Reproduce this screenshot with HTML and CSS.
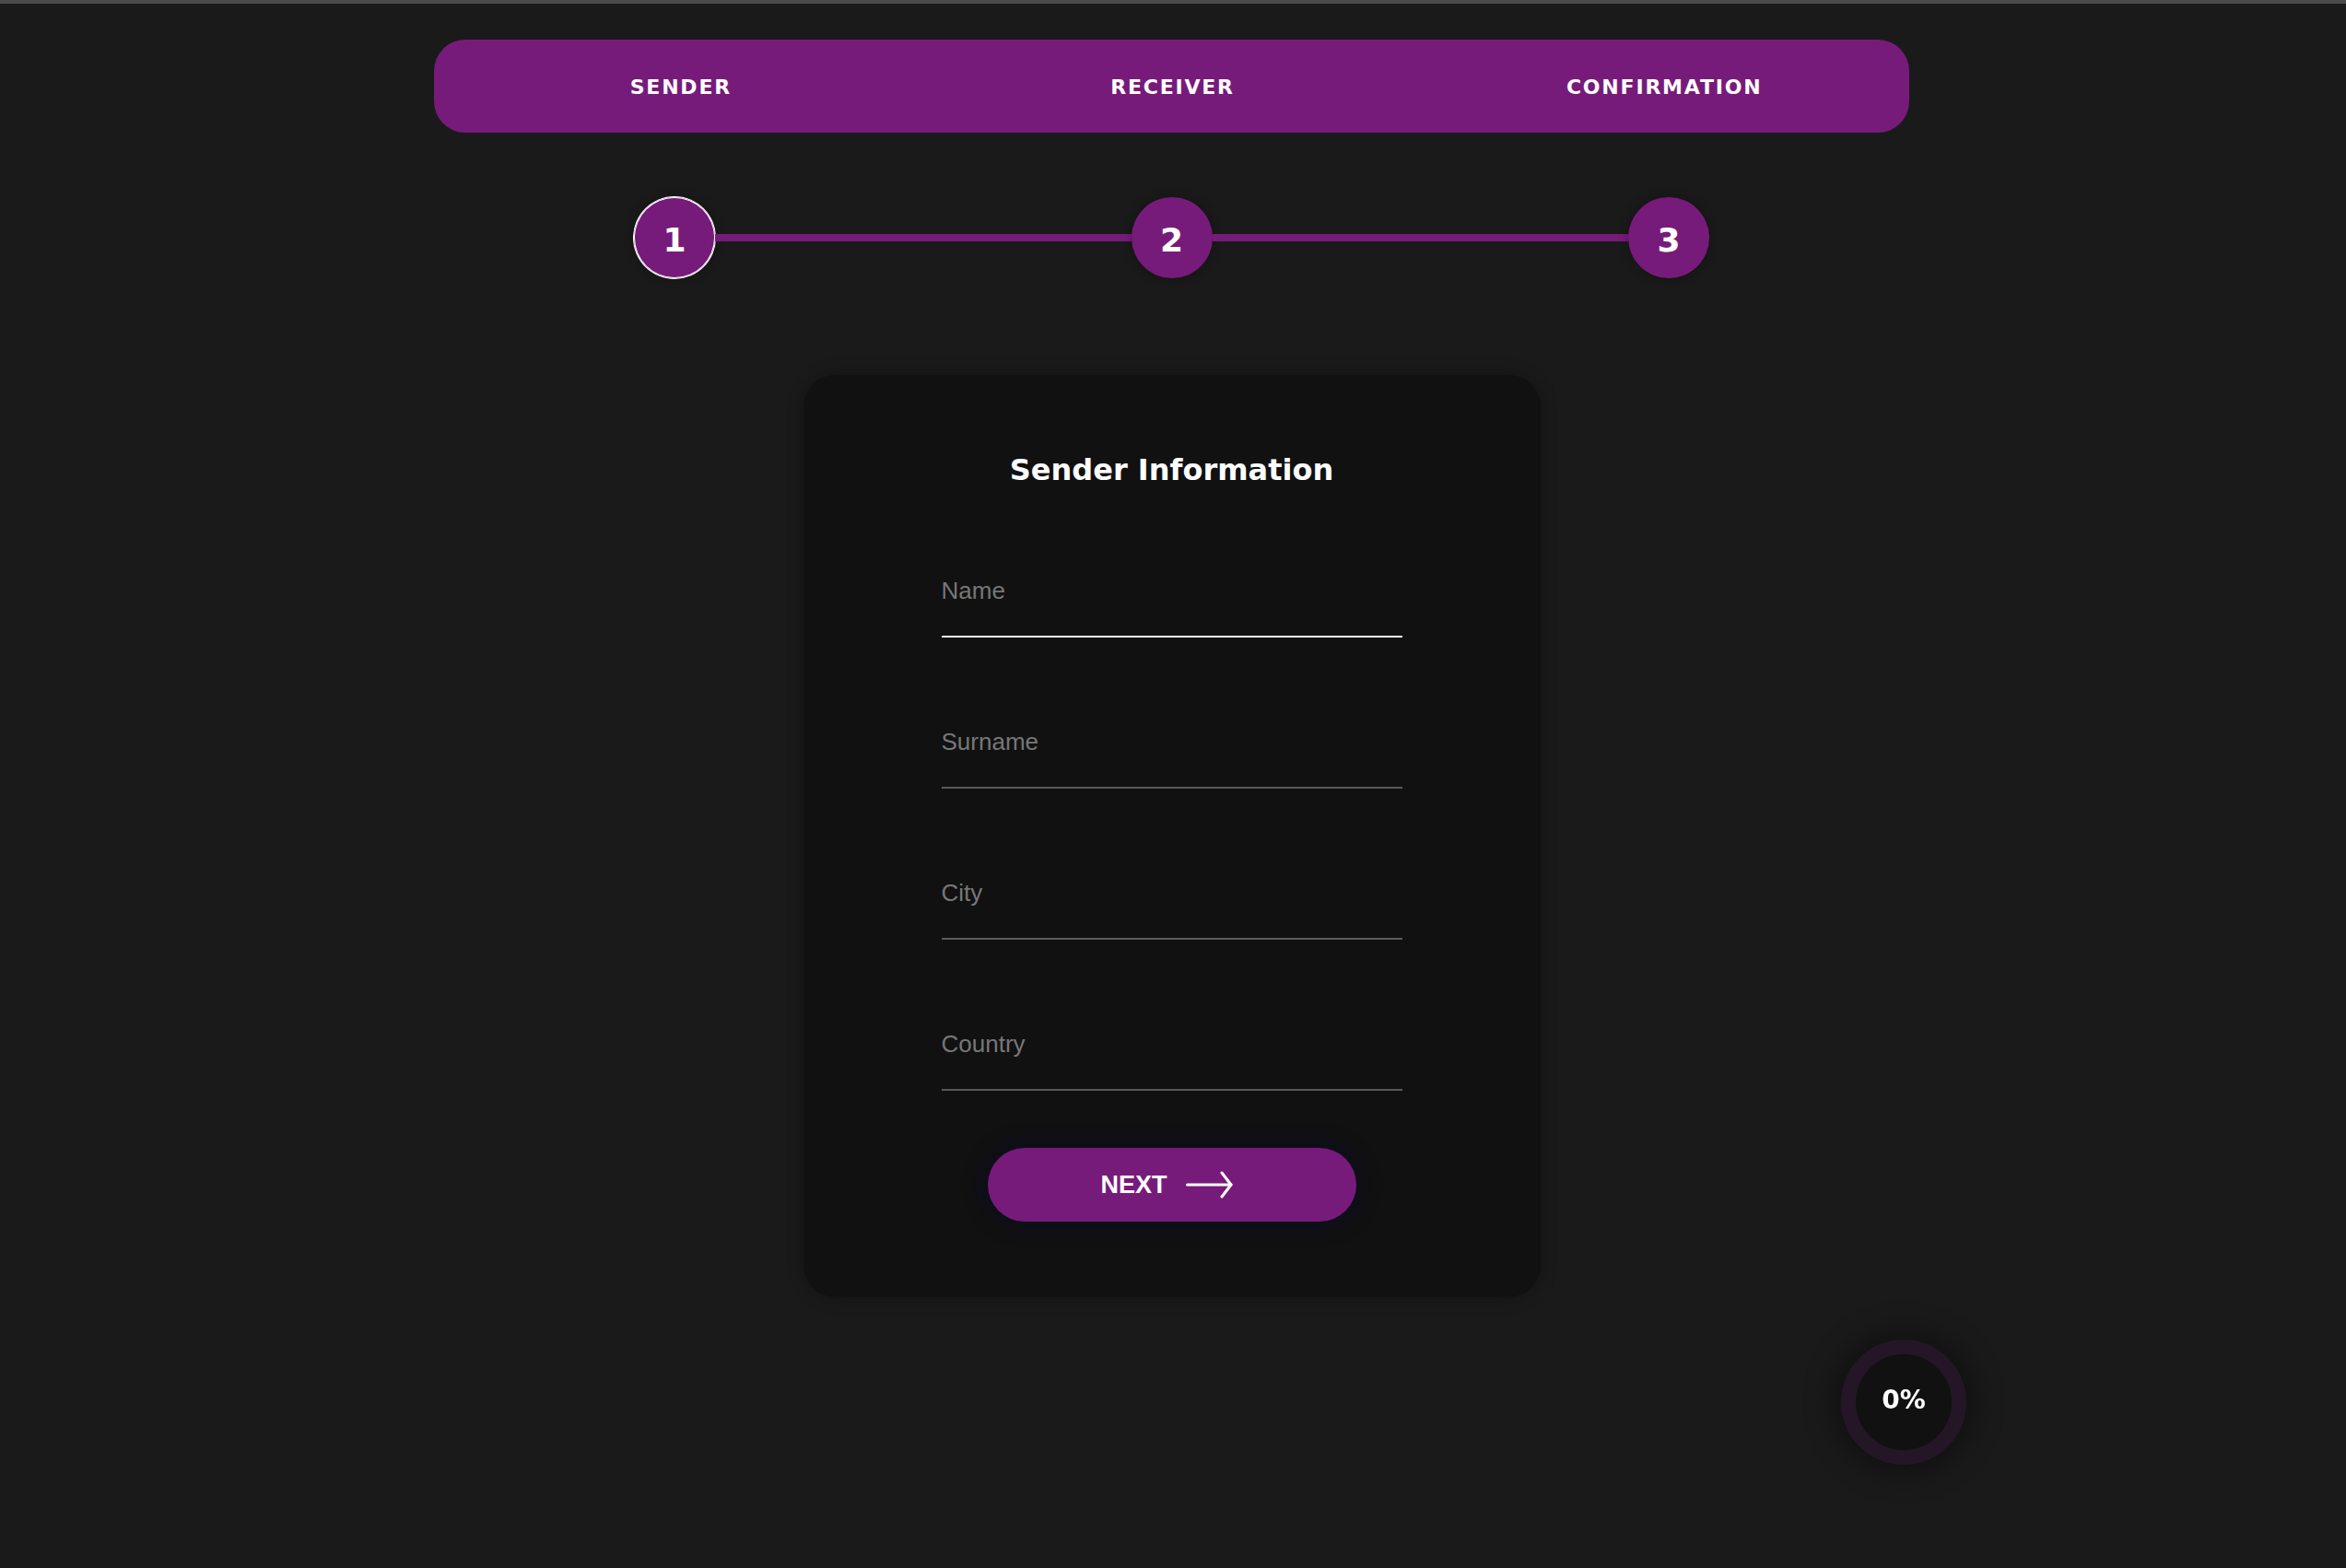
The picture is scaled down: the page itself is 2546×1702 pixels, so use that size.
FILE: index.html
```html
<!DOCTYPE html>
<html lang="en">
<head>
<meta charset="utf-8">
<title>Transfer - Sender</title>
<link rel="stylesheet" href="styles.css">
</head>
<body>
<!-- step tabs -->
<div class="tabs">
  <div class="tab">Sender</div>
  <div class="tab">Receiver</div>
  <div class="tab">Confirmation</div>
</div>

<!-- progress steps -->
<div class="steps">
  <div class="step active">1</div>
  <div class="step-line"></div>
  <div class="step">2</div>
  <div class="step-line"></div>
  <div class="step">3</div>
</div>

<!-- form card -->
<form class="card">
  <h2 class="card-title">Sender Information</h2>
  <div class="fields">
    <input class="field focused" type="text" placeholder="Name">
    <input class="field" type="text" placeholder="Surname">
    <input class="field" type="text" placeholder="City">
    <input class="field" type="text" placeholder="Country">
  </div>
  <button class="next-btn" type="button">
    <span>NEXT</span>
    <svg width="52" height="30" viewBox="0 0 52 30" fill="none" stroke="#fff" stroke-width="3" stroke-linecap="round" stroke-linejoin="round">
      <line x1="1.5" y1="15" x2="49" y2="15"/>
      <polyline points="39,2 49,15 39,28"/>
    </svg>
  </button>
</form>

<div class="progress"><span>0%</span></div>
</body>
</html>
```

FILE: styles.css
```css
body { margin:0; padding-right:3px; background:#1a1a1a; border-top:4px solid #4b4b4d; font-family:"DejaVu Sans", Verdana, sans-serif; color:#fff; min-height:1698px; }

.tabs { width:1601px; height:101px; margin:39px auto 0; background:#771b7b; border-radius:34px; display:flex; }
.tab { flex:1; display:flex; align-items:center; justify-content:center; font-size:22px; font-weight:bold; letter-spacing:1.8px; text-transform:uppercase; padding:2px 0 0 2px; }

.steps { width:1167px; margin:70px auto 0; display:flex; align-items:center; }
.step { width:88px; height:88px; border-radius:50%; background:#771b7b; display:flex; align-items:center; justify-content:center; font-size:36px; font-weight:bold; padding-top:4px; box-sizing:border-box; box-shadow:0 0 12px rgba(0,0,0,.3); flex:none; }
.step.active { box-shadow:0 0 0 1px #fff, inset 0 0 0 1px #fff, 0 0 12px rgba(0,0,0,.3); }
.step-line { flex:1; height:8px; background:#771b7b; }

.card { width:800px; box-sizing:border-box; margin:105px auto 0; padding:83px 150px 82px; background:#111; border-radius:35px; box-shadow:0 0 18px rgba(0,0,0,.3); display:flex; flex-direction:column; align-items:center; }
.card-title { margin:0 0 86px; font-size:32px; line-height:40px; font-weight:bold; text-align:center; }

.fields { display:flex; flex-direction:column; gap:88px; width:500px; }
.field { display:block; width:100%; height:76px; box-sizing:border-box; padding:10px 0 34px; margin:0; border:0; border-bottom:2px solid #5a5a5a; background:transparent; outline:none; font-family:"Liberation Sans", Arial, sans-serif; font-size:26px; line-height:30px; color:#ddd; }
.field.focused { border-bottom-color:#fff; }
.field::placeholder { color:#777; opacity:1; }

.next-btn { margin-top:62px; width:400px; height:80px; border:0; border-radius:40px; background:#771b7b; color:#fff; font-family:"Liberation Sans", Arial, sans-serif; font-size:27px; font-weight:bold; display:flex; align-items:center; justify-content:center; gap:20px; padding:0 10px 0 0; box-shadow:0 0 14px 12px rgba(12,12,30,.55); cursor:pointer; }
.next-btn svg { display:block; }

.progress { position:fixed; right:412px; bottom:112px; width:136px; height:136px; box-sizing:border-box; border:16px solid #241626; border-radius:50%; background:#111; box-shadow:0 0 30px 10px rgba(0,0,0,.35); display:flex; align-items:center; justify-content:center; font-size:28px; font-weight:bold; }
.progress span { margin-top:-6px; }
```
